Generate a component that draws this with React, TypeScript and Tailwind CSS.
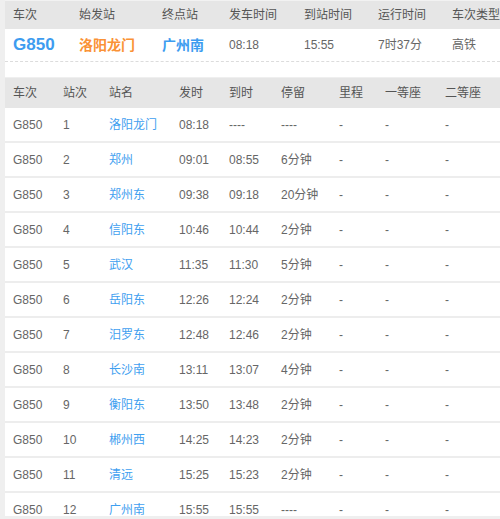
import React from "react";

const rows: [string, string, string, string, string][] = [
  ["1", "洛阳龙门", "08:18", "----", "----"],
  ["2", "郑州", "09:01", "08:55", "6分钟"],
  ["3", "郑州东", "09:38", "09:18", "20分钟"],
  ["4", "信阳东", "10:46", "10:44", "2分钟"],
  ["5", "武汉", "11:35", "11:30", "5分钟"],
  ["6", "岳阳东", "12:26", "12:24", "2分钟"],
  ["7", "汨罗东", "12:48", "12:46", "2分钟"],
  ["8", "长沙南", "13:11", "13:07", "4分钟"],
  ["9", "衡阳东", "13:50", "13:48", "2分钟"],
  ["10", "郴州西", "14:25", "14:23", "2分钟"],
  ["11", "清远", "15:25", "15:23", "2分钟"],
  ["12", "广州南", "15:55", "15:55", "----"],
];

const grid2 = "grid grid-cols-[50px_46px_70px_50px_52px_58px_46px_60px_1fr] pl-[8px] items-center shrink-0";
const grid1 = "grid grid-cols-[66px_83px_67px_75px_74px_74px_1fr] pl-[8px] items-center shrink-0";

export default function App() {
  return (
    <div
      className="w-[500px] h-[519px] bg-[#efefef] pl-[5px] overflow-hidden text-[12px]"
      style={{ fontFamily: '"Liberation Sans", Arial, "Noto Sans CJK SC", sans-serif' }}
    >
      <div className="h-[516px] overflow-hidden bg-white flex flex-col">
        {/* summary table */}
        <div className={`${grid1} h-[29px] bg-[#e6e6e6] border-t border-[#f2f2f2] text-[#555]`}>
          <div>车次</div>
          <div>始发站</div>
          <div>终点站</div>
          <div>发车时间</div>
          <div>到站时间</div>
          <div>运行时间</div>
          <div>车次类型</div>
        </div>
        <div className={`${grid1} h-[33px] text-[#666] border-b border-dashed border-[#dcdcdc]`}>
          <div className="text-[17px] font-bold text-[#3d9cf0]">G850</div>
          <div className="text-[14px] font-bold text-[#fa9236]">洛阳龙门</div>
          <div className="text-[14px] font-bold text-[#3d9cf0]">广州南</div>
          <div>08:18</div>
          <div>15:55</div>
          <div>7时37分</div>
          <div>高铁</div>
        </div>
        <div className="h-[15px] shrink-0"></div>
        <div className="h-[1px] shrink-0 bg-[#efefef]"></div>
        {/* stop table */}
        <div className={`${grid2} h-[30px] bg-[#e6e6e6] text-[#555]`}>
          <div>车次</div>
          <div>站次</div>
          <div>站名</div>
          <div>发时</div>
          <div>到时</div>
          <div>停留</div>
          <div>里程</div>
          <div>一等座</div>
          <div>二等座</div>
        </div>
        {rows.map((r) => (
          <div
            key={r[0]}
            className={`${grid2} h-[35px] border-b-2 border-[#ededed] text-[#666]`}
          >
            <div>G850</div>
            <div>{r[0]}</div>
            <div className="text-[#3fa0f0]">{r[1]}</div>
            <div>{r[2]}</div>
            <div>{r[3]}</div>
            <div>{r[4]}</div>
            <div>-</div>
            <div>-</div>
            <div>-</div>
          </div>
        ))}
      </div>
    </div>
  );
}
